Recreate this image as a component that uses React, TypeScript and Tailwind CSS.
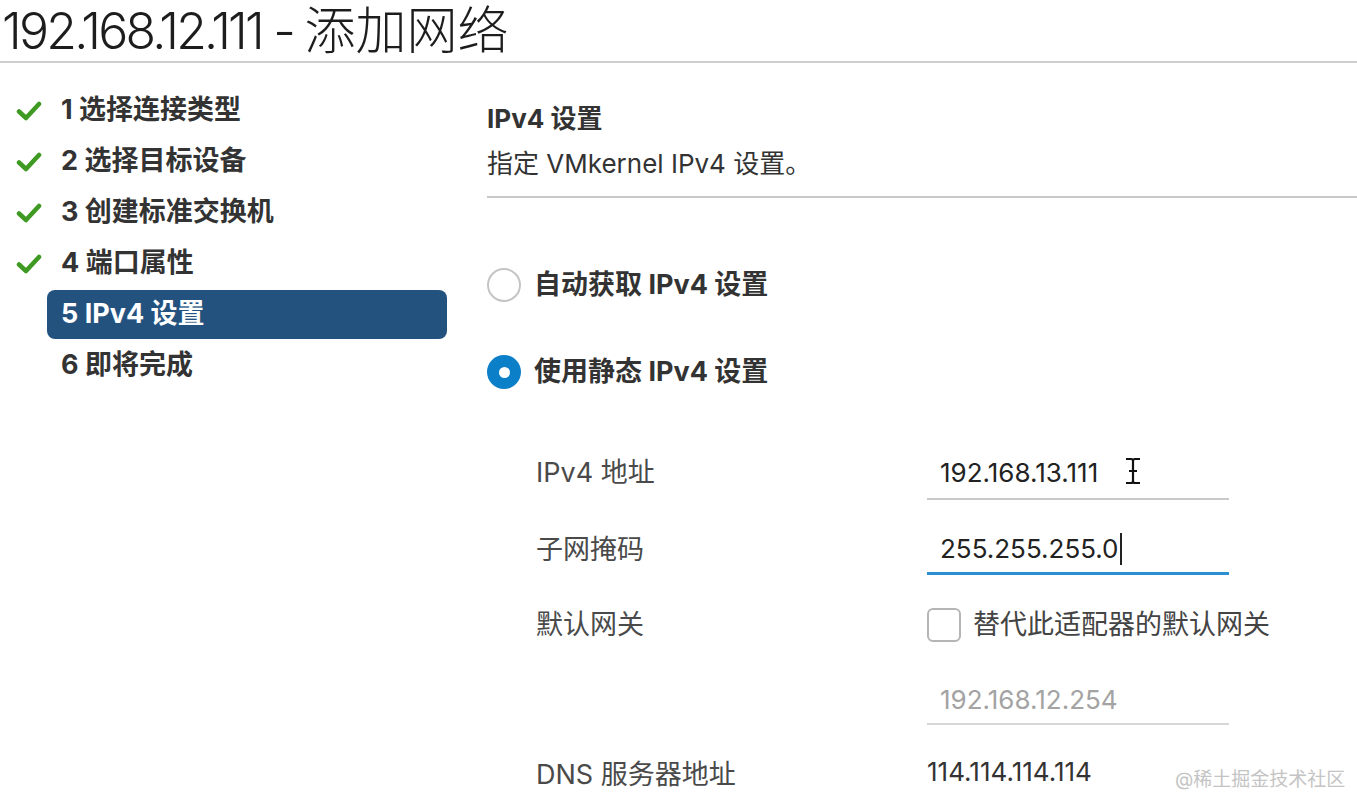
import React from 'react';

const FONT = "font-['Inter','Noto_Sans_CJK_SC',sans-serif]";

interface Step {
  label: string;
  done: boolean;
  active?: boolean;
}

const steps: Step[] = [
  { label: '1 选择连接类型', done: true },
  { label: '2 选择目标设备', done: true },
  { label: '3 创建标准交换机', done: true },
  { label: '4 端口属性', done: true },
  { label: '5 IPv4 设置', done: false, active: true },
  { label: '6 即将完成', done: false },
];

const Check: React.FC = () => (
  <svg width="26" height="22" viewBox="0 0 26 22">
    <path d="M3 11.5 L10 18 L23 4" fill="none" stroke="#3e9a22" strokeWidth="4.5" strokeLinecap="round" strokeLinejoin="round" />
  </svg>
);

const Radio: React.FC<{ checked?: boolean; label: string }> = ({ checked, label }) => (
  <div className="flex items-center h-[40px]">
    {checked ? (
      <div className="w-[34px] h-[34px] rounded-full bg-[#0b7fc7] flex items-center justify-center">
        <div className="w-[11px] h-[11px] rounded-full bg-white" />
      </div>
    ) : (
      <div className="w-[34px] h-[34px] rounded-full border-2 border-[#c4c4c4] bg-white" />
    )}
    <span className="ml-[13px] text-[27px] font-bold text-[#333]">{label}</span>
  </div>
);

const IBeam: React.FC = () => (
  <svg width="18" height="28" viewBox="0 0 18 28">
    <path d="M2 2 H7 Q9 2 9 4 V24 Q9 26 7 26 H2 M16 2 H11 Q9 2 9 4 M9 24 Q9 26 11 26 H16 M5 14 H13" fill="none" stroke="#111" strokeWidth="2.2" />
  </svg>
);

export default function App() {
  return (
    <div className={`relative w-[1357px] h-[812px] overflow-hidden bg-white ${FONT}`}>
      <div className="h-[63px] border-b-2 border-[#cfcfcf] flex items-center pl-[2px]">
        <h1 className="text-[50px] font-light text-[#1d1d1d] leading-none">
          <span className="tracking-[-0.055em]">192.168.12.111 - </span>
          <span className="text-[51px]">添加网络</span>
        </h1>
      </div>

      <div className="flex">
        <nav className="w-[487px] pt-[22px] shrink-0">
          {steps.map((s) => (
            <div key={s.label} className="flex items-center h-[51px]">
              <div className="w-[47px] pl-[16px] flex items-center">{s.done && <Check />}</div>
              <div
                className={`w-[400px] h-[49px] flex items-center px-[14px] rounded-lg text-[27px] font-bold ${
                  s.active ? 'bg-[#23527f] text-white' : 'text-[#333]'
                }`}
              >
                {s.label}
              </div>
            </div>
          ))}
        </nav>

        <main className="flex-1 pt-[36px]">
          <div className="border-b-2 border-[#c8c8c8] pb-[12px]">
            <div className="text-[26px] font-bold text-[#333] leading-[40px]">IPv4 设置</div>
            <div className="mt-[5px] text-[26px] text-[#333] leading-[40px]">指定 VMkernel IPv4 设置。</div>
          </div>

          <div className="mt-[67px] flex flex-col gap-[47px]">
            <Radio label="自动获取 IPv4 设置" />
            <Radio checked label="使用静态 IPv4 设置" />
          </div>

          <div className="mt-[55px] pl-[49px] text-[26px]">
            <div className="flex items-center h-[53px]">
              <div className="w-[391px] text-[#4a4a4a] text-[27px]">IPv4 地址</div>
              <div className="relative w-[302px] h-[53px] border-b-2 border-[#c9c9c9] flex items-center pl-[13px] text-[#222]">
                192.168.13.111
                <div className="absolute left-[197px] top-[10px]">
                  <IBeam />
                </div>
              </div>
            </div>

            <div className="flex items-center h-[50px] mt-[25px]">
              <div className="w-[391px] text-[#4a4a4a] text-[27px]">子网掩码</div>
              <div className="w-[302px] h-[50px] border-b-[3px] border-[#2b8fd0] flex items-center pl-[13px] text-[#222]">
                255.255.255.0
                <span className="inline-block w-[2px] h-[32px] bg-[#222] ml-[1px]" />
              </div>
            </div>

            <div className="flex items-center h-[50px] mt-[25px]">
              <div className="w-[391px] text-[#4a4a4a] text-[27px]">默认网关</div>
              <div className="flex items-center">
                <div className="w-[34px] h-[34px] rounded-md border-2 border-[#b5b5b5] bg-white" />
                <span className="ml-[12px] text-[#444] text-[27px]">替代此适配器的默认网关</span>
              </div>
            </div>

            <div className="flex items-center h-[50px] mt-[25px]">
              <div className="w-[391px]" />
              <div className="w-[302px] h-[50px] border-b-2 border-[#d6d6d6] flex items-center pl-[13px] text-[#a3a3a3]">
                192.168.12.254
              </div>
            </div>

            <div className="flex items-center h-[40px] mt-[30px]">
              <div className="w-[391px] text-[#4a4a4a] text-[27px]">DNS 服务器地址</div>
              <div className="text-[#333] -mt-[8px]">114.114.114.114</div>
            </div>
          </div>
        </main>
      </div>

      <div className="absolute left-[1175px] top-[766px] text-[19px] text-[#c4c4c4]">@稀土掘金技术社区</div>
    </div>
  );
}
